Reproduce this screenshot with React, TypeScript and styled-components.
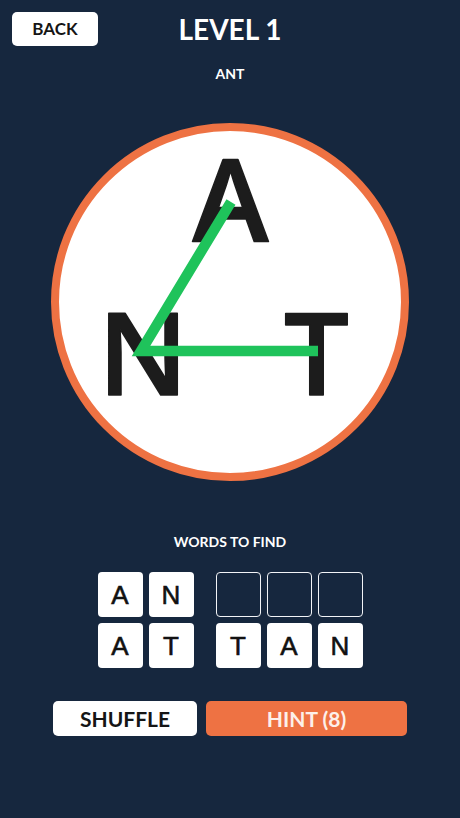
import React from "react";
import styled, { createGlobalStyle } from "styled-components";

const Global = createGlobalStyle`
  html, body { margin: 0; padding: 0; background: #16273e; }
  body { font-family: Lato, "Noto Sans", sans-serif; }
  * { box-sizing: border-box; }
`;

const Screen = styled.div`
  width: 460px;
  height: 818px;
  padding-top: 12px;
  display: flex;
  flex-direction: column;
  align-items: center;
  background: #16273e;
  overflow: hidden;
`;

const Header = styled.header`
  width: 100%;
  height: 34px;
  padding: 0 12px;
  display: grid;
  grid-template-columns: 1fr auto 1fr;
  align-items: center;
`;

const BackButton = styled.button`
  justify-self: start;
  width: 86px;
  height: 34px;
  padding: 0;
  border: 0;
  border-radius: 5px;
  background: #ffffff;
  color: #151515;
  font: 700 17px/34px Lato, sans-serif;
  cursor: pointer;
`;

const Title = styled.h1`
  margin: 0;
  color: #ffffff;
  font: 700 28px/34px Lato, sans-serif;
`;

const Subtitle = styled.div`
  margin-top: 21px;
  color: #ffffff;
  font: 700 14px/14px Lato, sans-serif;
`;

const Board = styled.div`
  position: relative;
  margin-top: 42px;
  width: 358px;
  height: 358px;
  border-radius: 50%;
  border: 8px solid #ee7243;
  background: #ffffff;
`;

const BoardArt = styled.svg`
  position: absolute;
  top: -8px;
  left: -8px;
  width: 358px;
  height: 358px;
  overflow: visible;
`;

const BoardLetter = styled.text`
  font-family: "Open Sans", "Noto Sans", sans-serif;
  font-weight: 600;
  font-size: 115px;
  fill: #1c1c1c;
  stroke: #1c1c1c;
  stroke-width: 1.5px;
  stroke-linejoin: round;
`;

const SectionLabel = styled.div`
  margin-top: 54px;
  color: #ffffff;
  font: 700 14px/14px Lato, sans-serif;
`;

const WordBoard = styled.div`
  margin-top: 23px;
  display: flex;
  gap: 22px;
`;

const WordColumn = styled.div`
  display: flex;
  flex-direction: column;
  gap: 6px;
`;

const Word = styled.div`
  display: flex;
  gap: 6px;
`;

const Tile = styled.div<{ $empty?: boolean }>`
  width: 45px;
  height: 45px;
  border-radius: 4px;
  display: flex;
  align-items: center;
  justify-content: center;
  background: ${(p) => (p.$empty ? "transparent" : "#ffffff")};
  border: ${(p) => (p.$empty ? "1.5px solid #f2f4f7" : "0")};
  color: #111111;
  font: 400 26px/1 "Liberation Sans", Arial, sans-serif;
  -webkit-text-stroke: 0.6px #111111;
`;

const Actions = styled.div`
  margin-top: 33px;
  display: flex;
  gap: 9px;
`;

const ActionButton = styled.button<{ $primary?: boolean; $w: number }>`
  width: ${(p) => p.$w}px;
  height: 35px;
  padding: 0;
  border: 0;
  border-radius: 5px;
  background: ${(p) => (p.$primary ? "#ee7243" : "#ffffff")};
  color: ${(p) => (p.$primary ? "#fdf0ea" : "#151515")};
  font: 700 21px/35px Lato, sans-serif;
  cursor: pointer;
`;

const columns: { word: string; found: boolean }[][] = [
  [
    { word: "AN", found: true },
    { word: "AT", found: true },
  ],
  [
    { word: "ANT", found: false },
    { word: "TAN", found: true },
  ],
];

export default function App() {
  return (
    <>
      <Global />
      <Screen>
        <Header>
          <BackButton>BACK</BackButton>
          <Title>LEVEL 1</Title>
          <span />
        </Header>
        <Subtitle>ANT</Subtitle>
        <Board>
          <BoardArt viewBox="51 123 358 358">
            <BoardLetter x={230.5} y={242} textAnchor="middle">
              A
            </BoardLetter>
            <BoardLetter x={143} y={395} textAnchor="middle">
              N
            </BoardLetter>
            <BoardLetter x={316.5} y={395} textAnchor="middle">
              T
            </BoardLetter>
            <polyline
              points="231,202 141,351 318,351"
              fill="none"
              stroke="#1fc35b"
              strokeWidth={10.5}
              strokeLinejoin="miter"
              strokeLinecap="butt"
            />
          </BoardArt>
        </Board>
        <SectionLabel>WORDS TO FIND</SectionLabel>
        <WordBoard>
          {columns.map((col, ci) => (
            <WordColumn key={ci}>
              {col.map((w) => (
                <Word key={w.word}>
                  {w.word.split("").map((ch, i) => (
                    <Tile key={i} $empty={!w.found}>
                      {w.found ? ch : ""}
                    </Tile>
                  ))}
                </Word>
              ))}
            </WordColumn>
          ))}
        </WordBoard>
        <Actions>
          <ActionButton $w={144}>SHUFFLE</ActionButton>
          <ActionButton $w={201} $primary>
            HINT (8)
          </ActionButton>
        </Actions>
      </Screen>
    </>
  );
}
